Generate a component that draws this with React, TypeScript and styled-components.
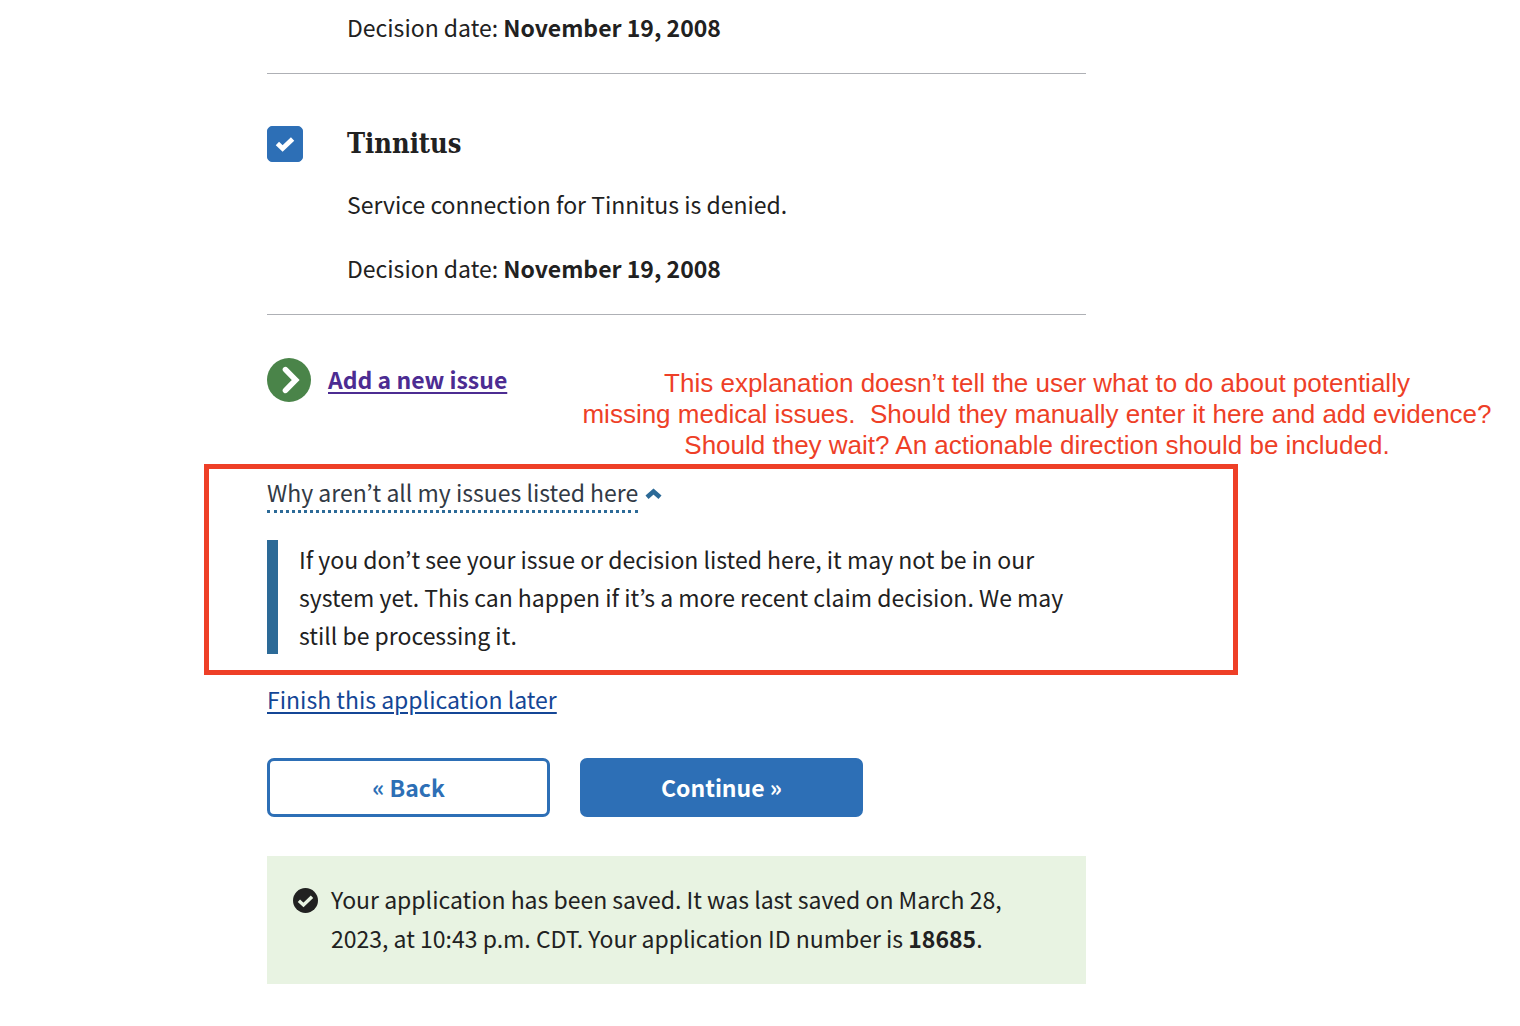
import React, { useState } from 'react';
import styled, { createGlobalStyle } from 'styled-components';

const sans = '"Noto Sans CJK KR", "Noto Sans", sans-serif';

const GlobalStyle = createGlobalStyle`
  *, *::before, *::after { box-sizing: border-box; }
  body {
    margin: 0;
    background: #fff;
    color: #212121;
    font-family: ${sans};
    font-size: 23px;
    line-height: 38px;
  }
  p, h3 { margin: 0; }
`;

const Page = styled.main`
  max-width: 1086px;
  padding: 8px 0 42px 267px;
`;

const IssueList = styled.ul`
  list-style: none;
  margin: 0;
  padding: 0;
`;

const Issue = styled.li`
  display: grid;
  grid-template-columns: 36px 1fr;
  column-gap: 44px;
  padding-bottom: 27px;
  border-bottom: 1px solid #aeb0b5;

  & + & { padding-top: 52px; }
`;

const IssueBody = styled.div`
  grid-column: 2;

  p + p { margin-top: 26px; }
`;

const IssueTitle = styled.h3`
  margin-bottom: 23px;
  font-family: "DejaVu Serif Condensed", "DejaVu Serif", serif;
  font-size: 27px;
  font-weight: 700;
  line-height: 36px;
`;

const CheckControl = styled.span`
  display: grid;
  width: 36px;
  height: 36px;
  place-items: center;

  & > * { grid-area: 1 / 1; }
  svg { pointer-events: none; }
`;

const Checkbox = styled.input`
  appearance: none;
  width: 36px;
  height: 36px;
  margin: 0;
  border: 1px solid #2e70b8;
  border-radius: 5px;
  background: #fff;

  &:checked { background: #2d6fb6; }
`;

const AddIssue = styled.a`
  display: flex;
  align-items: center;
  gap: 17px;
  width: fit-content;
  margin-top: 43px;
  color: #4c2c92;
  font-weight: 700;
  text-underline-offset: 3px;
  text-decoration-thickness: 2px;

  svg { display: block; }
  span { padding-bottom: 2px; }
`;

const Disclosure = styled.section`
  position: relative;
  margin-top: 73px;
`;

const DisclosureButton = styled.button`
  display: flex;
  align-items: center;
  gap: 7px;
  padding: 0;
  border: 0;
  background: none;
  color: #323a45;
  font: inherit;
`;

const DottedLabel = styled.span`
  border-bottom: 3px dotted #2c6a97;
  line-height: 35px;
`;

const Explanation = styled.p`
  margin-top: 27px;
  padding: 0 21px;
  border-left: 11px solid #2c6a97;
`;

const HighlightFrame = styled.div`
  position: absolute;
  inset: -11px -152px -21px -63px;
  border: 5px solid #ee3f27;
  pointer-events: none;
`;

const ReviewNote = styled.aside`
  position: absolute;
  left: 310px;
  bottom: 100%;
  width: 920px;
  padding-bottom: 14px;
  color: #ee3f27;
  font-family: "Liberation Sans", Arial, sans-serif;
  font-size: 26px;
  line-height: 31px;
  text-align: center;
  white-space: pre-line;
`;

const FinishLink = styled.a`
  display: block;
  width: fit-content;
  margin-top: 26px;
  color: #144696;
  text-underline-offset: 3px;
  text-decoration-thickness: 2px;
`;

const Actions = styled.div`
  display: grid;
  grid-template-columns: repeat(2, minmax(0, 283px));
  gap: 30px;
  margin-top: 40px;
`;

const ActionButton = styled.button<{ $primary?: boolean }>`
  height: 59px;
  padding: 0 6px 2px;
  border: 3px solid #2d6fb6;
  border-radius: 7px;
  background: ${(p) => (p.$primary ? '#2d6fb6' : '#fff')};
  color: ${(p) => (p.$primary ? '#fff' : '#2d6fb6')};
  font: inherit;
  font-weight: 700;
`;

const SavedAlert = styled.div`
  display: flex;
  gap: 13px;
  margin-top: 39px;
  padding: 24px 26px 26px;
  background: #e8f3e2;
  line-height: 39px;

  svg { flex: none; margin-top: 8px; }
`;

const CheckMark = () => (
  <svg width="20" height="16" viewBox="0 0 20 16" fill="none" aria-hidden="true">
    <path d="M2.4 7.6 7.6 12.4 17.6 3" stroke="#fff" strokeWidth="4.8" strokeLinejoin="miter" />
  </svg>
);

const ArrowCircle = () => (
  <svg width="44" height="44" viewBox="0 0 44 44" fill="none" aria-hidden="true">
    <circle cx="22" cy="22" r="22" fill="#4a8449" />
    <path d="M18.5 11.6 28.7 22 18.5 32.4" stroke="#fff" strokeWidth="5.6" strokeLinecap="round" strokeLinejoin="miter" />
  </svg>
);

const Caret = () => (
  <svg width="17" height="12" viewBox="0 0 17 12" fill="none" aria-hidden="true">
    <path d="M2 9.3 8.5 3.6 15 9.3" stroke="#2c6a97" strokeWidth="4.6" />
  </svg>
);

const SavedIcon = () => (
  <svg width="25" height="25" viewBox="0 0 25 25" fill="none" aria-hidden="true">
    <circle cx="12.5" cy="12.5" r="12.5" fill="#212121" />
    <path d="M5.9 12.8 10.5 17 19 8.8" stroke="#e8f3e2" strokeWidth="3.4" strokeLinecap="butt" />
  </svg>
);

export default function App() {
  const [selected, setSelected] = useState(true);
  const [open, setOpen] = useState(true);

  return (
    <>
      <GlobalStyle />
      <Page>
        <IssueList>
          <Issue>
            <IssueBody>
              <p>Decision date: <strong>November 19, 2008</strong></p>
            </IssueBody>
          </Issue>
          <Issue>
            <CheckControl>
              <Checkbox
                id="tinnitus"
                type="checkbox"
                checked={selected}
                onChange={(e) => setSelected(e.target.checked)}
              />
              {selected && <CheckMark />}
            </CheckControl>
            <IssueBody>
              <IssueTitle><label htmlFor="tinnitus">Tinnitus</label></IssueTitle>
              <p>Service connection for Tinnitus is denied.</p>
              <p>Decision date: <strong>November 19, 2008</strong></p>
            </IssueBody>
          </Issue>
        </IssueList>

        <AddIssue href="#add">
          <ArrowCircle />
          <span>Add a new issue</span>
        </AddIssue>

        <Disclosure>
          <DisclosureButton type="button" aria-expanded={open} onClick={() => setOpen(!open)}>
            <DottedLabel>Why aren’t all my issues listed here</DottedLabel>
            <Caret />
          </DisclosureButton>
          {open && (
            <Explanation>
              If you don’t see your issue or decision listed here, it may not be in our system yet.
              This can happen if it’s a more recent claim decision. We may still be processing it.
            </Explanation>
          )}
          <HighlightFrame />
          <ReviewNote>
            {'This explanation doesn’t tell the user what to do about potentially\nmissing medical issues.\u00a0 Should they manually enter it here and add evidence?\nShould they wait? An actionable direction should be included.'}
          </ReviewNote>
        </Disclosure>

        <FinishLink href="#later">Finish this application later</FinishLink>

        <Actions>
          <ActionButton type="button">« Back</ActionButton>
          <ActionButton type="button" $primary>Continue »</ActionButton>
        </Actions>

        <SavedAlert role="status">
          <SavedIcon />
          <p>
            Your application has been saved. It was last saved on March 28, 2023, at 10:43 p.m. CDT.
            Your application ID number is <strong>18685</strong>.
          </p>
        </SavedAlert>
      </Page>
    </>
  );
}
